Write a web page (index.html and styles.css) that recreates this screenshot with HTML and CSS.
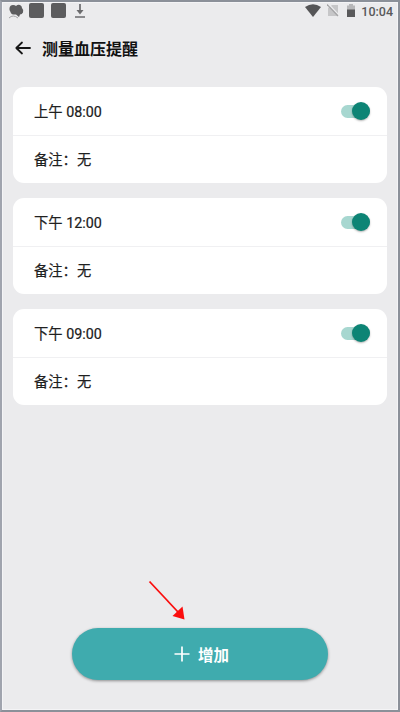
FILE: index.html
```html
<!DOCTYPE html>
<html lang="zh-CN">
<head>
<meta charset="utf-8">
<title>测量血压提醒</title>
<link rel="stylesheet" href="styles.css">
</head>
<body>
<div class="screen">
  <div class="status">
    <div class="status-left">
      <svg width="17" height="16" viewBox="0 0 17 16"><path d="M1.500 5Q2 2 5 2Q7 2 8 3Q10 1 12 2Q14 3 14 5Q16 7 15 9.500Q14 11.500 12 11.500L11 14L8 11.500Q3 12 2.500 9Q1 7 1.500 5Z" fill="#5c5c5e"/><path d="M1 15Q5 11 10 15" fill="none" stroke="#a5a5a7" stroke-width="1"/></svg>
      <span class="square"></span>
      <span class="square"></span>
      <svg class="download" width="12" height="16" viewBox="0 0 12 16"><path d="M6 1V10M1 14H11" fill="none" stroke="#6b6b6d" stroke-width="1.700"/><path d="M2.500 7H9.500L6 11.500Z" fill="#6b6b6d"/></svg>
    </div>
    <div class="status-right">
      <svg width="16" height="13" viewBox="0 0 16 13"><path d="M0 3Q8-2.500 16 3L8 13Z" fill="#555557"/></svg>
      <svg class="sim" width="12" height="13" viewBox="0 0 12 13"><path d="M5 1H11V12H1V4Z" fill="#c6c6c8"/><path d="M1.500 0L12 11" stroke="#ececee" stroke-width="1.200"/><path d="M0 .5L11 12" stroke="#a4a4a6" stroke-width="1.200"/></svg>
      <svg class="battery" width="10" height="13" viewBox="0 0 10 13"><path d="M3 0H7V1.500H9V7H1V1.500H3Z" fill="#b7b7b9"/><path d="M1 5.500H9V13H1Z" fill="#59595b"/></svg>
      <span class="clock">10:04</span>
    </div>
  </div>
  <header class="header">
    <svg width="16" height="14" viewBox="0 0 16 14"><path d="M15 7H1.500M7 1.500L1.300 7L7 12.500" fill="none" stroke="#171717" stroke-width="1.800" stroke-linecap="round" stroke-linejoin="round"/></svg>
    <h1>测量血压提醒</h1>
  </header>
  <main class="cards">
    <section class="card"><div class="row"><span class="time">上午 08:00</span><span class="switch"></span></div><div class="row note">备注：无</div></section>
    <section class="card"><div class="row"><span class="time">下午 12:00</span><span class="switch"></span></div><div class="row note">备注：无</div></section>
    <section class="card"><div class="row"><span class="time">下午 09:00</span><span class="switch"></span></div><div class="row note">备注：无</div></section>
  </main>
  <button class="add"><svg width="16" height="16" viewBox="0 0 16 16"><path d="M8 .5V15.500M.5 8H15.500" stroke="#fff" stroke-width="1.700"/></svg><span>增加</span></button>
  <svg class="pointer" width="40" height="42" viewBox="0 0 40 42"><path d="M1.500 1.500L30 32" stroke="#fb0d0d" stroke-width="1.800"/><path d="M36.500 39.500L24.500 36L34.500 26.500Z" fill="#fb0d0d"/></svg>
</div>
</body>
</html>
```
FILE: styles.css
```css
* { box-sizing: border-box; }
body { margin: 0; font-family: Roboto, "Noto Sans CJK SC", sans-serif; color: #202020; }
.screen {
  position: relative;
  display: flex;
  flex-direction: column;
  width: 400px;
  height: 712px;
  background: #ebebed;
  border: 2px solid #8b9099;
  border-left-color: #a0a4ae;
  box-shadow: inset 0 0 0 1px #f4f4f6;
}
.status { display: flex; justify-content: space-between; height: 25px; padding: 0 5px 0 6px; }
.status-left, .status-right { display: flex; align-items: flex-start; }
.status-left { padding-top: 1px; }
.square { width: 15px; height: 15px; margin-left: 4px; border-radius: 2px; background: #5c5c5e; }
.square + .square { margin-left: 7px; }
.download { margin-left: 8px; }
.status-right { padding-top: 2px; }
.sim { margin-left: 6px; }
.battery { margin-left: 7px; }
.clock { margin-left: 5px; font-size: 12.5px; line-height: 15px; font-weight: 500; color: #59595b; }
.header { display: flex; align-items: center; height: 42px; padding-left: 13px; }
.header h1 { margin: 4px 0 0 11px; font-size: 16px; line-height: 24px; font-weight: 700; color: #111; }
.cards { display: flex; flex-direction: column; gap: 15px; padding: 18px 11px 0; }
.card { height: 96px; border-radius: 11px; background: #fff; }
.row { display: flex; align-items: center; justify-content: space-between; height: 48px; padding: 0 17px 0 21px; font-size: 14.3px; -webkit-text-stroke: .2px #202020; }
.time { padding-bottom: 2px; }
.row + .row { border-top: 1px solid #f0f0f2; padding-bottom: 2px; }
.switch { position: relative; width: 29px; height: 13px; border-radius: 7px; background: #a7d7d0; }
.switch::after {
  content: "";
  position: absolute;
  top: -3px;
  right: 0;
  width: 18px;
  height: 18px;
  border-radius: 50%;
  background: #0d8475;
  box-shadow: 0 1px 2px rgba(0, 0, 0, .3);
}
.add {
  display: flex;
  align-items: center;
  justify-content: center;
  gap: 8px;
  width: 256px;
  height: 52px;
  margin: auto 0 30px 70px;
  padding: 0 0 0 3px;
  border: 0;
  border-radius: 26px;
  background: #3fabae;
  color: #fff;
  font: 700 15.500px Roboto, "Noto Sans CJK SC", sans-serif;
  box-shadow: 0 1px 3px rgba(0, 0, 0, .4);
}
.pointer { position: absolute; left: 146px; top: 578px; }
```
